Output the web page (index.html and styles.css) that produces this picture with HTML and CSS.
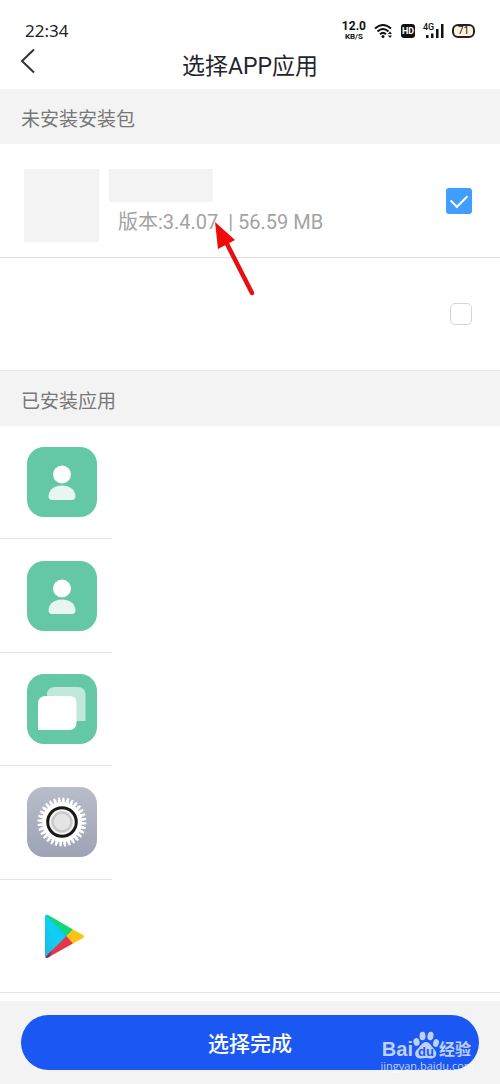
FILE: index.html
```html
<!DOCTYPE html>
<html lang="zh-CN">
<head>
<meta charset="utf-8">
<meta name="viewport" content="width=device-width, initial-scale=1">
<title>选择APP应用</title>
<link rel="stylesheet" href="styles.css">
</head>
<body>
<div class="page">
  <div class="status">
    <span class="clock">22:34</span>
    <div class="indicators">
      <span class="speed"><span class="speed-value">12.0</span><span class="speed-unit">KB/S</span></span>
      <svg class="wifi" width="19" height="16" viewBox="0 0 19 16" fill="none" stroke="#111" stroke-width="2">
        <path d="M1 5.500Q9 -1.500 17 5.500M3.500 8.500Q9 3.500 14.500 8.500M6 11.300Q9 8.500 12 11.300"/>
        <circle cx="9" cy="13.500" r="1.500" fill="#111" stroke="none"/>
        <path d="M14 11l2-2.500 2 2.500zM14 12.500l2 2.500 2-2.500z" fill="#111" stroke="none"/>
      </svg>
      <span class="hd">HD</span>
      <span class="signal">
        <span class="network">4G</span>
        <svg width="21" height="16" viewBox="0 0 21 16" fill="#111"><path d="M3 12h2.500v3H3zM8 10.500h2.500V15H8zM13 6h2.500v9H13zM18 1h2.500v14H18z"/></svg>
      </span>
      <span class="battery">71</span>
    </div>
  </div>

  <header class="nav">
    <button class="back" type="button" aria-label="返回">
      <svg width="16" height="26" viewBox="0 0 16 26" fill="none" stroke="#333" stroke-width="2"><path d="M14 1.500L2 13l12 11.500"/></svg>
    </button>
    <h1 class="title">选择APP应用</h1>
  </header>

  <h2 class="section">未安装安装包</h2>
  <label class="package package-first">
    <span class="thumb"></span>
    <span class="details">
      <span class="name"></span>
      <span class="meta">版本:3.4.07&nbsp; | 56.59 MB</span>
    </span>
    <input class="check" type="checkbox" aria-label="选择安装包" checked>
    <svg class="pointer" width="42" height="76" viewBox="0 0 42 76"><path d="M12 20L38 71" stroke="#e60f12" stroke-width="4.500" stroke-linecap="round"/><path d="M1 0L21 18L4 27z" fill="#f00a0a"/></svg>
  </label>
  <label class="package">
    <input class="check" type="checkbox" aria-label="选择第二个安装包">
  </label>

  <h2 class="section">已安装应用</h2>
  <ul class="apps">
    <li class="app">
      <svg class="icon" viewBox="0 0 70 70"><rect width="70" height="70" rx="17" fill="#64c8a6"/><circle cx="35" cy="27.500" r="9" fill="#fff"/><path d="M21.500 49C22 42 28 38.500 35 38.500S48 42 48.500 49Q48.500 53 45 53H25Q21.500 53 21.500 49z" fill="#e8f6f1"/></svg>
    </li>
    <li class="app">
      <svg class="icon" viewBox="0 0 70 70"><rect width="70" height="70" rx="17" fill="#64c8a6"/><circle cx="35" cy="27.500" r="9" fill="#fff"/><path d="M21.500 49C22 42 28 38.500 35 38.500S48 42 48.500 49Q48.500 53 45 53H25Q21.500 53 21.500 49z" fill="#e8f6f1"/></svg>
    </li>
    <li class="app">
      <svg class="icon" viewBox="0 0 70 70"><rect width="70" height="70" rx="17" fill="#64c8a6"/><path d="M28 13H51Q58.500 13 58.500 20.500V47H20V21Q20 13 28 13z" fill="#c1e9db"/><path d="M19 22H42Q49.500 22 49.500 29V48.500Q49.500 56 42 56H11V30Q11 22 19 22z" fill="#fff"/></svg>
    </li>
    <li class="app">
      <svg class="icon" viewBox="0 0 70 70" fill="none">
        <defs><linearGradient id="steel" x2="0" y2="1"><stop stop-color="#b9bdca"/><stop offset="1" stop-color="#9da3b5"/></linearGradient></defs>
        <rect width="70" height="70" rx="17" fill="url(#steel)"/>
        <circle cx="35" cy="35" r="20" fill="#fff"/>
        <circle cx="35" cy="35" r="20.500" stroke="#fff" stroke-width="4" pathLength="96" stroke-dasharray="2 1"/>
        <circle cx="35" cy="35" r="23" stroke="#fff" stroke-width="3" pathLength="96" stroke-dasharray="1.400 1.600" stroke-dashoffset="-.3"/>
        <circle cx="35" cy="35" r="14.300" fill="#f3f3f3" stroke="#191919" stroke-width="3"/>
        <circle cx="35" cy="35" r="9.500" fill="#e5e5e5" stroke="#cacaca" stroke-width="2.500"/>
      </svg>
    </li>
    <li class="app app-full">
      <svg class="icon" viewBox="0 0 70 70">
        <defs><linearGradient id="sky" x1="1" y1="0" x2="0" y2="1"><stop stop-color="#12b6e8"/><stop offset=".5" stop-color="#10d0f5"/><stop offset="1" stop-color="#23b4df"/></linearGradient></defs>
        <path d="M18 15.500Q18 13 21 14L41 35 20 56.500Q18 57 18 55z" fill="url(#sky)"/>
        <path d="M19 14Q20 13.300 22 14.500L46 28.500 40 35z" fill="#10d875"/>
        <path d="M46 28.500L56 34Q58 35.500 56 37L46 42.500 39.500 35z" fill="#fbc413"/>
        <path d="M39.500 35L46 42.500 21 56.500Q19 57.500 18.500 56z" fill="#e6354b"/>
        <path d="M18.500 56L25 49.500 23 55.500 20 57z" fill="#823050"/>
      </svg>
    </li>
  </ul>

  <footer class="footer">
    <button class="done" type="button">选择完成</button>
    <div class="watermark">
      <div class="brand">
        <span class="brand-latin">Bai</span>
        <span class="paw">
          <svg width="26" height="28" viewBox="0 0 26 28" fill="currentColor"><ellipse cx="3.500" cy="11" rx="3" ry="4" transform="rotate(-15 3.500 11)"/><ellipse cx="9.500" cy="5" rx="3" ry="4.300"/><ellipse cx="17.500" cy="5" rx="3" ry="4.300" transform="rotate(10 17.500 5)"/><ellipse cx="23" cy="12" rx="2.800" ry="4" transform="rotate(15 23 12)"/><path d="M13 11C17 11 18 15 21 18C26 23 22 28 18 27.500Q13 26.500 8 27.500C3 28 0 23 4 18.500C8 15 9 11 13 11z"/></svg>
          <span class="paw-text">du</span>
        </span>
        <span class="brand-cjk">经验</span>
      </div>
      <div class="url">jingyan.baidu.com</div>
    </div>
  </footer>
</div>
</body>
</html>
```
FILE: styles.css
```css
* { box-sizing: border-box; }

body {
  margin: 0;
  background: #fff;
  font-family: Roboto, "Noto Sans CJK SC", sans-serif;
  color: #222;
}

.page {
  display: flex;
  flex-direction: column;
  min-height: 100vh;
}

.status {
  display: flex;
  align-items: center;
  justify-content: space-between;
  height: 42px;
  padding: 20px 25px 0;
}

.clock {
  font-family: "Noto Sans", sans-serif;
  font-size: 17px;
  line-height: 20px;
}

.indicators {
  display: flex;
  align-items: center;
  gap: 8px;
  color: #111;
}

.speed {
  display: flex;
  flex-direction: column;
  align-items: center;
  font-weight: 700;
}

.speed-value { font-size: 12px; line-height: 11px; }
.speed-unit { font-size: 8px; line-height: 9px; }

.wifi { display: block; }

.hd {
  width: 14px;
  border-radius: 3px;
  background: #111;
  color: #fff;
  font-size: 9px;
  font-weight: 700;
  line-height: 14px;
  text-align: center;
}

.signal { position: relative; }
.signal svg { display: block; }

.network {
  position: absolute;
  top: 0;
  left: 0;
  font-size: 9px;
  font-weight: 500;
  line-height: 9px;
}

.battery {
  width: 23px;
  border: 2px solid #222;
  border-radius: 6px;
  background: #fcf4da;
  font-size: 10px;
  line-height: 10px;
  text-align: center;
}

.nav {
  display: grid;
  grid-template-columns: 56px 1fr 56px;
  align-items: center;
  height: 47px;
  padding-top: 2px;
}

.back {
  display: flex;
  align-self: start;
  margin-top: 4px;
  padding: 0 20px;
  border: 0;
  background: none;
}

.title {
  margin: 0;
  font-size: 23px;
  font-weight: 400;
  line-height: 32px;
  text-align: center;
  color: #24242e;
}

.section {
  margin: 0;
  padding: 17px 21px 10px;
  background: #f3f3f3;
  font-size: 19px;
  font-weight: 400;
  line-height: 28px;
  color: #777;
}

.package {
  position: relative;
  display: flex;
  align-items: center;
  min-height: 113px;
  padding: 0 28px 0 24px;
  border-bottom: 1px solid #e8e8e8;
}

.package-first {
  min-height: 114px;
  border-bottom-color: #dedede;
}

.thumb {
  width: 75px;
  height: 73px;
  margin-top: 10px;
  background: #f3f3f3;
}

.details {
  display: flex;
  flex-direction: column;
  gap: 6px;
  margin: 4px 0 0 10px;
}

.name {
  width: 104px;
  height: 33px;
  background: #f3f3f3;
}

.meta {
  padding-left: 9px;
  font-size: 20px;
  line-height: 28px;
  white-space: nowrap;
  color: #a3a3a3;
}

.check {
  appearance: none;
  width: 22px;
  height: 22px;
  margin: 0 0 0 auto;
  border: 1px solid #d4d4d4;
  border-radius: 5px;
  background: #fff;
}

.check:checked {
  display: grid;
  place-items: center;
  width: 26px;
  height: 26px;
  border: 0;
  border-radius: 3px;
  background: #409eff;
}

.check:checked::before {
  content: "";
  width: 14px;
  height: 8px;
  margin-bottom: 4px;
  border: solid #fff;
  border-width: 0 0 2px 2px;
  transform: rotate(-45deg);
}

.pointer {
  position: absolute;
  top: 78px;
  left: 214px;
  z-index: 1;
}

.apps {
  display: grid;
  flex: 1;
  grid-auto-rows: 1fr;
  margin: 0;
  padding: 0 0 8px;
  list-style: none;
}

.app {
  display: flex;
  align-items: center;
  width: 112px;
  min-height: 100px;
  padding-left: 27px;
  border-bottom: 1px solid #e4e4e4;
}

.app-full { width: 100%; }

.icon {
  width: 70px;
  height: 70px;
}

.footer {
  position: relative;
  padding: 14px 21px;
  background: #f3f3f3;
}

.done {
  display: block;
  width: 100%;
  height: 55px;
  padding: 0 0 2px;
  border: 0;
  border-radius: 28px;
  background: #1b58f3;
  font-family: inherit;
  font-size: 21px;
  font-weight: 500;
  color: #fff;
}

.watermark {
  position: absolute;
  right: 26px;
  bottom: 11px;
  color: rgba(255, 255, 255, .72);
  pointer-events: none;
}

.brand {
  display: flex;
  align-items: flex-end;
  justify-content: flex-end;
  padding-right: 3px;
}

.brand-latin {
  font-family: "Liberation Sans", sans-serif;
  font-size: 20px;
  font-weight: 700;
  line-height: 20px;
}

.paw { position: relative; }
.paw svg { display: block; }

.paw-text {
  position: absolute;
  right: 0;
  bottom: 0;
  left: 0;
  font-family: "Liberation Sans", sans-serif;
  font-size: 13px;
  font-weight: 700;
  line-height: 14px;
  text-align: center;
  color: #1b58f3;
}

.brand-cjk {
  font-size: 16px;
  font-weight: 700;
  line-height: 18px;
}

.url {
  font-family: "Open Sans", sans-serif;
  font-size: 11px;
  line-height: 14px;
}
```
